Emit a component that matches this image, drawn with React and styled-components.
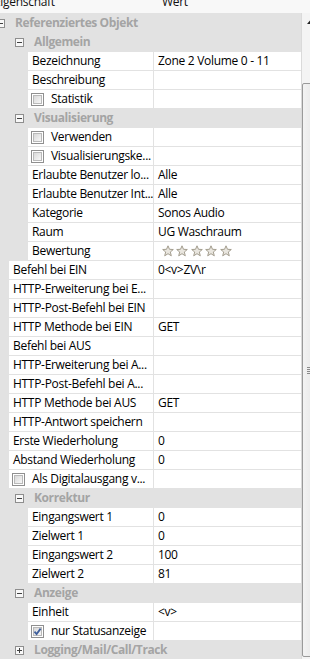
import React from "react";
import styled, { createGlobalStyle } from "styled-components";

const GlobalStyle = createGlobalStyle`
  html, body { margin: 0; padding: 0; background: #ffffff; overflow: hidden; }
  body { font-family: "Open Sans", "Noto Sans", "Liberation Sans", sans-serif; font-size: 12px; letter-spacing: -0.3px; color: #000; }
`;

const Frame = styled.div`
  width: 310px;
  height: 660px;
  overflow: hidden;
`;

const Panel = styled.div`
  margin-left: -8px;
  width: 326px;
  display: flex;
  flex-direction: column;
`;

const Header = styled.div`
  height: 13px;
  display: grid;
  grid-template-columns: 162px 1fr;
  background: #f8f8f8;
  overflow: hidden;
`;

const HeaderCell = styled.div`
  height: 13px;
  display: flex;
  align-items: flex-end;
  padding-left: ${(p) => p.$pad}px;
  line-height: 16px;
  white-space: nowrap;
  color: #111;
  & > span { position: relative; top: -3px; }
`;

const Body = styled.div`
  display: flex;
`;

const Rows = styled.div`
  width: 309px;
  background: #e2e2e2;
  display: flex;
  flex-direction: column;
`;

const RowWrap = styled.div`
  padding-top: 1px;
  height: 18px;
  display: flex;
`;

const Gutter = styled.div`
  width: ${(p) => 17 + 19 * p.$level}px;
  flex: none;
`;

const NameCell = styled.div`
  width: ${(p) => 161 - (17 + 19 * p.$level)}px;
  flex: none;
  background: #fff;
  display: flex;
  align-items: center;
  padding-left: 4px;
  box-sizing: border-box;
  white-space: nowrap;
  overflow: hidden;
  line-height: 18px;
`;

const CheckNameCell = styled(NameCell)`
  padding-left: 3px;
  gap: 7px;
`;

const ValueCell = styled.div`
  margin-left: 1px;
  flex: 1;
  background: #fff;
  display: flex;
  align-items: center;
  padding-left: 4px;
  white-space: nowrap;
  overflow: hidden;
  line-height: 18px;
`;

const CatRow = styled.div`
  padding-top: 1px;
  height: 18px;
  display: flex;
  align-items: center;
  padding-left: ${(p) => 4 + 19 * p.$level}px;
`;

const Expander = styled.span`
  width: 9px;
  height: 9px;
  box-sizing: border-box;
  border: 1px solid #8e8e8e;
  background: #f8f8f8;
  position: relative;
  flex: none;
  &::before {
    content: "";
    position: absolute;
    left: 1px;
    top: 3px;
    width: 5px;
    height: 1px;
    background: #404040;
  }
  &::after {
    content: "";
    display: ${(p) => (p.$collapsed ? "block" : "none")};
    position: absolute;
    left: 3px;
    top: 1px;
    width: 1px;
    height: 5px;
    background: #404040;
  }
`;

const CatLabel = styled.span`
  margin-left: 10px;
  font-weight: 700;
  letter-spacing: -0.4px;
  color: #a4a4a4;
  white-space: nowrap;
  line-height: 18px;
`;

const Box = styled.span`
  width: 13px;
  height: 13px;
  box-sizing: border-box;
  border: 1px solid #8f8f8f;
  background: #fff;
  padding: 1px;
  flex: none;
  display: flex;
  position: relative;
  &::before {
    content: "";
    flex: 1;
    border: 1px solid #b9b9b9;
    background: linear-gradient(135deg, #d8d8d8, #f7f7f7);
  }
  & > svg { position: absolute; left: 1px; top: 1px; }
`;

const Stars = styled.div`
  display: flex;
  gap: 2.4px;
  padding-left: 4px;
`;

const Scrollbar = styled.div`
  width: 17px;
  flex: none;
  box-sizing: border-box;
  border-left: 1px solid #dadada;
  background: #f4f4f4;
  display: flex;
  flex-direction: column;
`;

const ArrowButton = styled.div`
  height: 17px;
  display: flex;
  align-items: center;
  justify-content: center;
`;

const Thumb = styled.div`
  margin-top: 53px;
  height: 574px;
  box-sizing: border-box;
  border: 1px solid #9a9a9a;
  border-radius: 2px;
  background: linear-gradient(90deg, #f3f3f3, #e4e4e4);
  display: flex;
  align-items: center;
  justify-content: center;
`;

const Grip = styled.div`
  width: 7px;
  display: flex;
  flex-direction: column;
  gap: 1px;
  & > i { display: block; height: 1px; background: #8a8a8a; }
`;

const Star = () => (
  <svg width="12" height="12" viewBox="0 0 12 12">
    <path
      d="M6 0.8 L7.5 4.3 L11.3 4.5 L8.3 7 L9.3 10.8 L6 8.7 L2.7 10.8 L3.7 7 L0.7 4.5 L4.5 4.3 Z"
      fill="#e9e6df"
      stroke="#a39d8e"
      strokeWidth="1"
      strokeLinejoin="round"
    />
  </svg>
);

const Check = ({ checked }) => (
  <Box>
    {checked && (
      <svg width="9" height="9" viewBox="0 0 9 9">
        <path d="M1.5 4.6 L3.6 7 L7.6 1.6" fill="none" stroke="#3f5f9c" strokeWidth="1.8" />
      </svg>
    )}
  </Box>
);

const rows = [
  { cat: "Referenziertes Objekt", level: 0 },
  { cat: "Allgemein", level: 1 },
  { name: "Bezeichnung", value: "Zone 2 Volume 0 - 11", level: 1 },
  { name: "Beschreibung", value: "", level: 1 },
  { name: "Statistik", check: false, level: 1 },
  { cat: "Visualisierung", level: 1 },
  { name: "Verwenden", check: false, level: 1 },
  { name: "Visualisierungske...", check: false, level: 1 },
  { name: "Erlaubte Benutzer lo...", value: "Alle", level: 1 },
  { name: "Erlaubte Benutzer Int...", value: "Alle", level: 1 },
  { name: "Kategorie", value: "Sonos Audio", level: 1 },
  { name: "Raum", value: "UG Waschraum", level: 1 },
  { name: "Bewertung", stars: true, level: 1 },
  { name: "Befehl bei EIN", value: "0<v>ZV\\r", level: 0 },
  { name: "HTTP-Erweiterung bei E...", value: "", level: 0 },
  { name: "HTTP-Post-Befehl bei EIN", value: "", level: 0 },
  { name: "HTTP Methode bei EIN", value: "GET", level: 0 },
  { name: "Befehl bei AUS", value: "", level: 0 },
  { name: "HTTP-Erweiterung bei A...", value: "", level: 0 },
  { name: "HTTP-Post-Befehl bei A...", value: "", level: 0 },
  { name: "HTTP Methode bei AUS", value: "GET", level: 0 },
  { name: "HTTP-Antwort speichern", value: "", level: 0 },
  { name: "Erste Wiederholung", value: "0", level: 0 },
  { name: "Abstand Wiederholung", value: "0", level: 0 },
  { name: "Als Digitalausgang v...", check: false, level: 0 },
  { cat: "Korrektur", level: 1 },
  { name: "Eingangswert 1", value: "0", level: 1 },
  { name: "Zielwert 1", value: "0", level: 1 },
  { name: "Eingangswert 2", value: "100", level: 1 },
  { name: "Zielwert 2", value: "81", level: 1 },
  { cat: "Anzeige", level: 1 },
  { name: "Einheit", value: "<v>", level: 1 },
  { name: "nur Statusanzeige", check: true, level: 1 },
  { cat: "Logging/Mail/Call/Track", level: 1, collapsed: true },
];

const Row = ({ r }) => {
  if (r.cat) {
    return (
      <CatRow $level={r.level}>
        <Expander $collapsed={r.collapsed} />
        <CatLabel>{r.cat}</CatLabel>
      </CatRow>
    );
  }
  return (
    <RowWrap>
      <Gutter $level={r.level} />
      {r.check !== undefined ? (
        <CheckNameCell $level={r.level}>
          <Check checked={r.check} />
          <span>{r.name}</span>
        </CheckNameCell>
      ) : (
        <NameCell $level={r.level}>{r.name}</NameCell>
      )}
      <ValueCell>
        {r.stars ? (
          <Stars>
            {[0, 1, 2, 3, 4].map((i) => (
              <Star key={i} />
            ))}
          </Stars>
        ) : (
          r.value
        )}
      </ValueCell>
    </RowWrap>
  );
};

export default function App() {
  return (
    <Frame>
      <GlobalStyle />
      <Panel>
        <Header>
          <HeaderCell $pad={2}><span>Eigenschaft</span></HeaderCell>
          <HeaderCell $pad={8}><span>Wert</span></HeaderCell>
        </Header>
        <Body>
          <Rows>
            {rows.map((r, i) => (
              <Row key={i} r={r} />
            ))}
          </Rows>
          <Scrollbar>
            <ArrowButton>
              <svg width="7" height="4" viewBox="0 0 7 4">
                <path d="M0 4 L3.5 0 L7 4 Z" fill="#222" />
              </svg>
            </ArrowButton>
            <Thumb>
              <Grip>
                <i />
                <i />
                <i />
                <i />
              </Grip>
            </Thumb>
          </Scrollbar>
        </Body>
      </Panel>
    </Frame>
  );
}
